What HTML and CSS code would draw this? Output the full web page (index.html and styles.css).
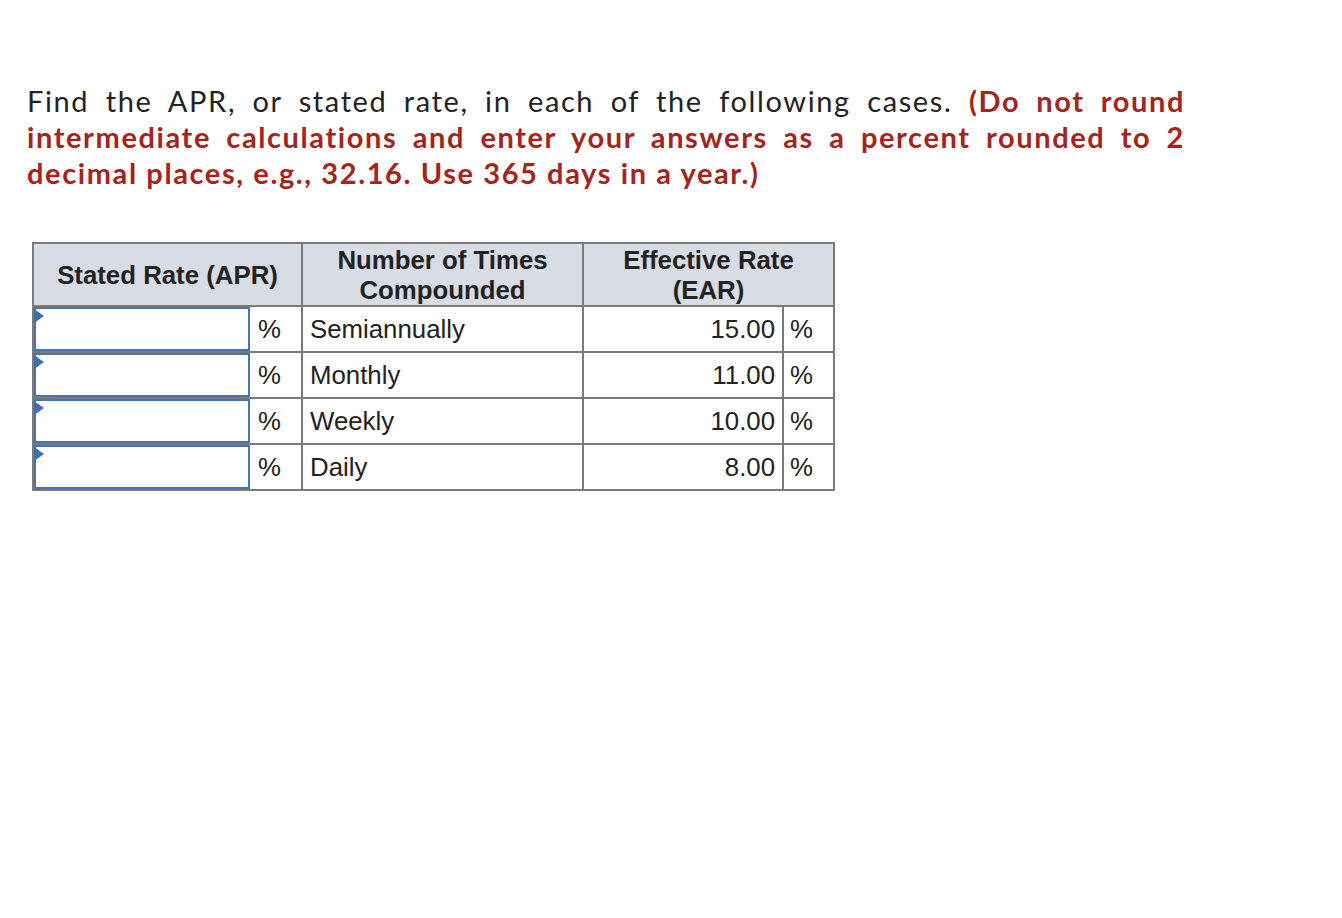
FILE: index.html
```html
<!DOCTYPE html>
<html>
<head>
<meta charset="utf-8">
<link rel="stylesheet" href="styles.css">
</head>
<body>
<div class="page">
  <p class="question">Find the APR, or stated rate, in each of the following cases. <strong class="hint">(Do not round intermediate calculations and enter your answers as a percent rounded to 2 decimal places, e.g., 32.16. Use 365 days in a year.)</strong></p>

  <table class="rates">
    <colgroup>
      <col class="c-input">
      <col class="c-pct">
      <col class="c-comp">
      <col class="c-val">
      <col class="c-pct2">
    </colgroup>
    <thead>
      <tr>
        <th colspan="2">Stated Rate (APR)</th>
        <th>Number of Times<br>Compounded</th>
        <th colspan="2">Effective Rate<br>(EAR)</th>
      </tr>
    </thead>
    <tbody>
      <tr>
        <td class="inp"><div class="box"><span class="flag"></span></div></td>
        <td class="pct">%</td>
        <td class="comp">Semiannually</td>
        <td class="val">15.00</td>
        <td class="pct2">%</td>
      </tr>
      <tr>
        <td class="inp"><div class="box"><span class="flag"></span></div></td>
        <td class="pct">%</td>
        <td class="comp">Monthly</td>
        <td class="val">11.00</td>
        <td class="pct2">%</td>
      </tr>
      <tr>
        <td class="inp"><div class="box"><span class="flag"></span></div></td>
        <td class="pct">%</td>
        <td class="comp">Weekly</td>
        <td class="val">10.00</td>
        <td class="pct2">%</td>
      </tr>
      <tr>
        <td class="inp"><div class="box"><span class="flag"></span></div></td>
        <td class="pct">%</td>
        <td class="comp">Daily</td>
        <td class="val">8.00</td>
        <td class="pct2">%</td>
      </tr>
    </tbody>
  </table>
</div>
</body>
</html>
```

FILE: styles.css
```css
html, body {
  margin: 0;
  padding: 0;
  background: #ffffff;
}

.page {
  padding: 83px 0 0 27px;
}

.question {
  margin: 0;
  width: 1158px;
  font-family: Lato, "Open Sans", sans-serif;
  font-size: 29px;
  letter-spacing: 1.6px;
  line-height: 36px;
  color: #222222;
  text-align: justify;
}

.hint {
  font-weight: 700;
  color: #a6231c;
}

.rates {
  margin: 51px 0 0 5px;
  border-collapse: collapse;
  table-layout: fixed;
  width: 803px;
  font-family: "Liberation Sans", Arial, sans-serif;
  font-size: 25.8px;
  color: #222222;
  border: 2px solid #7a7a7a;
}

.c-input { width: 217px; }
.c-pct { width: 52px; }
.c-comp { width: 281px; }
.c-val { width: 200px; }
.c-pct2 { width: 51px; }

.rates th {
  background: #d8dce4;
  font-weight: 700;
  line-height: 30px;
  height: 61px;
  padding: 0;
  text-align: center;
  vertical-align: middle;
  border: 2px solid #7a7a7a;
}

.rates td {
  height: 44px;
  padding: 0;
  line-height: 30px;
  vertical-align: middle;
  border: 2px solid #7a7a7a;
}

.rates td.inp {
  border-right: none;
  padding: 0;
}

.rates td.pct {
  border-left: none;
  padding-left: 8px;
}

.rates td.comp {
  padding-left: 7px;
}

.rates td.val {
  text-align: right;
  padding-right: 7px;
}

.rates td.pct2 {
  padding-left: 6px;
}

.box {
  position: relative;
  box-sizing: border-box;
  height: 44px;
  border: 2px solid #4a72ae;
  background: #ffffff;
}

.flag {
  position: absolute;
  left: -2px;
  top: 0;
  width: 0;
  height: 0;
  border-top: 7px solid transparent;
  border-bottom: 7px solid transparent;
  border-left: 10px solid #3f6db5;
}
```
